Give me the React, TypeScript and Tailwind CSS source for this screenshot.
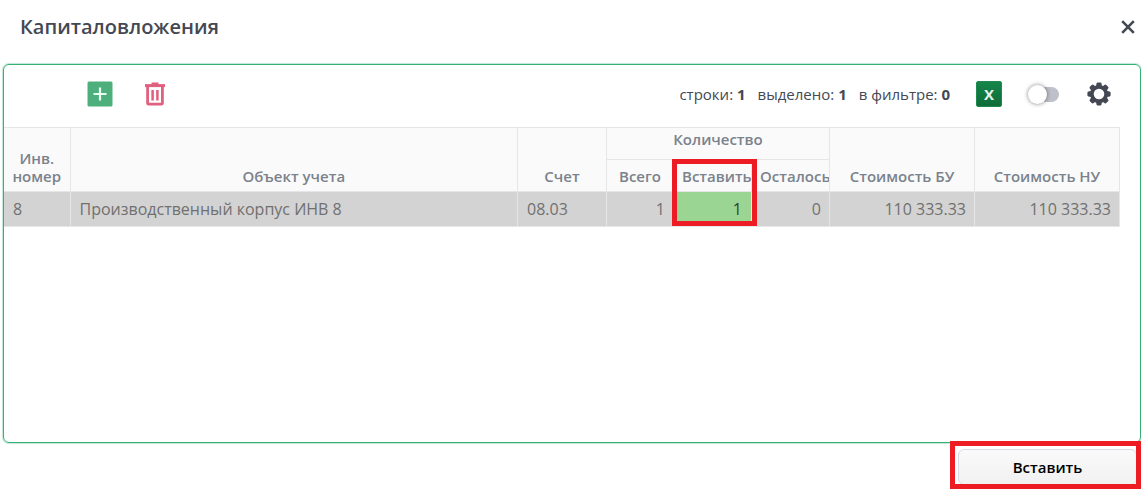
import { useState } from 'react';

const head =
  'border border-[#e6e6e9] bg-[#fafafa] p-0 pb-1.5 text-center align-bottom text-[15px] leading-[18px] font-semibold text-[#7b828c]';
const cell = 'border border-[#e6e6e9] bg-[#d3d3d3] py-0 pr-2 pl-[9px] text-base text-[#707070]';

function PlusIcon() {
  return (
    <svg viewBox="0 0 26 26" className="size-[26px]" aria-hidden="true">
      <rect x="0.5" y="0.5" width="25" height="25" rx="1.5" fill="#4db07c" />
      <path d="M13 6.5v13M6.5 13h13" stroke="#e9fff3" strokeWidth="2.2" fill="none" />
    </svg>
  );
}

function TrashIcon() {
  return (
    <svg viewBox="0 0 20 24" className="h-6 w-5" aria-hidden="true">
      <g fill="none" stroke="#e0607e">
        <path d="M0 3.6h20" strokeWidth="3" />
        <path d="M6.5 1.8h7" strokeWidth="2.6" />
        <path d="M2.6 4v17.2q0 1 1 1h12.8q1 0 1-1V4" strokeWidth="2.8" />
        <path d="M7.6 8v10.6M12.4 8v10.6" strokeWidth="2.5" />
      </g>
    </svg>
  );
}

function ExcelIcon() {
  return (
    <span className="flex size-[26px] items-center justify-center rounded-xs border border-[#1f8a4f] bg-linear-to-b from-[#15854a] to-[#0e6c38] text-[15px] leading-none font-bold text-[#e4f5eb]">
      X
    </span>
  );
}

function GearIcon() {
  const angles = [0, 45, 90, 135, 180, 225, 270, 315];
  return (
    <svg viewBox="-12 -12 24 24" className="size-6" aria-hidden="true">
      <circle r="7.2" fill="none" stroke="#444853" strokeWidth="3.8" />
      {angles.map((a) => (
        <path
          key={a}
          d="M-2.9-8L-2.5-10.6Q-2.3-11.6-1.3-11.6H1.3Q2.3-11.6 2.5-10.6L2.9-8z"
          fill="#444853"
          transform={`rotate(${a})`}
        />
      ))}
    </svg>
  );
}

export default function App() {
  const [detailed, setDetailed] = useState(false);
  const [amount, setAmount] = useState('1');

  return (
    <div className="flex min-h-screen flex-col bg-white font-['Open_Sans','Noto_Sans',sans-serif] text-[#444853]">
      <header className="flex h-16 items-start justify-between pt-3 pr-1.5 pl-5">
        <h1 className="text-xl leading-[30px] font-semibold">Капиталовложения</h1>
        <button type="button" aria-label="Закрыть" className="mt-2 cursor-pointer">
          <svg viewBox="0 0 14 14" className="size-3.5" aria-hidden="true">
            <path d="M1.2 1.2l11.6 11.6M12.8 1.2L1.2 12.8" stroke="#444853" strokeWidth="2.6" fill="none" />
          </svg>
        </button>
      </header>

      <main className="ml-[3px] flex-1 rounded-md border border-[#36b074] shadow-[0_0_1px_1px_rgba(54,176,116,0.3)]">
        <div className="mb-1 flex h-[58px] items-center justify-between pr-[29px] pl-[83px]">
          <div className="flex items-center gap-8">
            <button type="button" aria-label="Добавить" className="cursor-pointer">
              <PlusIcon />
            </button>
            <button type="button" aria-label="Удалить" className="cursor-pointer">
              <TrashIcon />
            </button>
          </div>
          <div className="flex items-center">
            <div className="flex gap-3 text-[15px] leading-5">
              <span>строки: <b>1</b></span>
              <span>выделено: <b>1</b></span>
              <span>в фильтре: <b>0</b></span>
            </div>
            <button type="button" aria-label="Экспорт в Excel" className="ml-[26px] cursor-pointer">
              <ExcelIcon />
            </button>
            <label className="relative ml-[26px] flex h-5 w-8 cursor-pointer items-center">
              <input
                type="checkbox"
                role="switch"
                aria-label="Подробный режим"
                className="peer sr-only"
                checked={detailed}
                onChange={(e) => setDetailed(e.target.checked)}
              />
              <span className="ml-1 h-[15px] w-[27px] rounded-full bg-[#bfc1ca] peer-checked:bg-[#4db07c]" />
              <span className="absolute left-0 size-[19px] rounded-full bg-white shadow-[0_0_4px_rgba(0,0,0,0.5)] peer-checked:left-3" />
            </label>
            <button type="button" aria-label="Настройки" className="ml-[27px] cursor-pointer">
              <GearIcon />
            </button>
          </div>
        </div>

        <div className="pr-5">
          <table className="w-full table-fixed border-collapse">
            <colgroup>
              <col className="w-[66px]" />
              <col />
              <col className="w-[89px]" />
              <col className="w-[67px]" />
              <col className="w-[78px]" />
              <col className="w-[78px]" />
              <col className="w-[145px]" />
              <col className="w-[145px]" />
            </colgroup>
            <thead>
              <tr className="h-8">
                <th rowSpan={2} className={`${head} border-l-0`}>Инв.<br />номер</th>
                <th rowSpan={2} className={head}>Объект учета</th>
                <th rowSpan={2} className={head}>Счет</th>
                <th colSpan={3} className={`${head} pb-[11px]`}>Количество</th>
                <th rowSpan={2} className={head}>Стоимость БУ</th>
                <th rowSpan={2} className={head}>Стоимость НУ</th>
              </tr>
              <tr className="h-8">
                <th className={head}>Всего</th>
                <th className={`${head} pl-2`}>Вставить</th>
                <th className={`${head} overflow-hidden pl-2`}>Осталось</th>
              </tr>
            </thead>
            <tbody>
              <tr className="h-[35px]">
                <td className={`${cell} border-l-0`}>8</td>
                <td className={cell}>Производственный корпус ИНВ 8</td>
                <td className={cell}>08.03</td>
                <td className={`${cell} text-right`}>1</td>
                <td className="relative border border-[#e6e6e9] bg-[#9ad593] p-0">
                  <input
                    type="text"
                    inputMode="numeric"
                    aria-label="Вставить, количество"
                    value={amount}
                    onChange={(e) => setAmount(e.target.value)}
                    className="block w-full bg-transparent pr-[9px] text-right text-base text-[#2f3f2f] outline-none"
                  />
                  <span className="pointer-events-none absolute -top-[33px] -right-[6px] bottom-0 -left-[2px] border-5 border-[#ed1c24]" />
                </td>
                <td className={`${cell} text-right`}>0</td>
                <td className={`${cell} text-right`}>110 333.33</td>
                <td className={`${cell} text-right`}>110 333.33</td>
              </tr>
            </tbody>
          </table>
        </div>
      </main>

      <footer className="flex h-12 justify-end pt-1.5">
        <div className="relative h-9 w-[183px] pr-1">
          <button
            type="button"
            className="h-full w-full cursor-pointer rounded-md border border-[#d9d9e6] bg-linear-to-b from-[#fafafa] to-[#f1f1f1] text-[15px] font-semibold text-black"
          >
            Вставить
          </button>
          <span className="pointer-events-none absolute -top-2 right-0 -bottom-1 -left-2 border-5 border-[#ed1c24]" />
        </div>
      </footer>
    </div>
  );
}
